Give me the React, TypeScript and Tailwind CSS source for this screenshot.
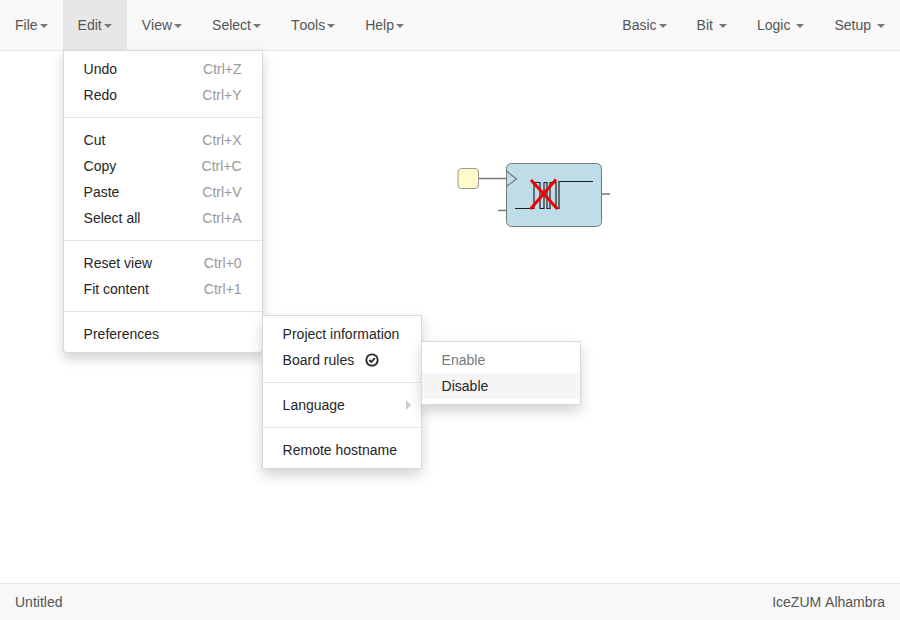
const leftMenus = ["File", "Edit", "View", "Select", "Tools", "Help"];
const rightMenus = [
  { label: "Basic", spaced: false },
  { label: "Bit", spaced: true },
  { label: "Logic", spaced: true },
  { label: "Setup", spaced: true },
];

function Caret({ spaced = false }: { spaced?: boolean }) {
  return (
    <span
      className={`inline-block w-0 h-0 align-middle border-x-4 border-t-4 border-x-transparent border-t-[#777] ${spaced ? "ml-[6px]" : "ml-[2px]"}`}
    />
  );
}

function NavItem({ label, active = false, spaced = false }: { label: string; active?: boolean; spaced?: boolean }) {
  return (
    <div className={`px-[15px] h-[50px] leading-[50px] text-[#555] ${active ? "bg-[#e7e7e7]" : ""}`}>
      {label}
      <Caret spaced={spaced} />
    </div>
  );
}

function Item({ label, hint, muted = false, hover = false }: { label: string; hint?: string; muted?: boolean; hover?: boolean }) {
  return (
    <div
      className={`flex justify-between h-[26px] px-5 leading-[26px] whitespace-nowrap ${muted ? "text-[#777]" : "text-[#262626]"} ${hover ? "bg-[#f5f5f5]" : ""}`}
    >
      <span>{label}</span>
      {hint && <span className="text-[#999]">{hint}</span>}
    </div>
  );
}

function Divider() {
  return <div className="h-px my-[9px] bg-[#e5e5e5]" />;
}

const menuClass =
  "absolute py-[5px] bg-white border border-black/15 shadow-[0_6px_12px_rgba(0,0,0,0.175)]";

function Diagram() {
  return (
    <svg className="absolute left-[450px] top-[104px]" width="170" height="80" viewBox="450 155 170 80" fill="none">
      <line x1="478" y1="178.5" x2="507" y2="178.5" stroke="#777" strokeWidth="1.5" />
      <line x1="498" y1="210.5" x2="507" y2="210.5" stroke="#777" strokeWidth="1.5" />
      <line x1="601" y1="194" x2="610" y2="194" stroke="#777" strokeWidth="1.5" />
      <rect x="458" y="168.5" width="20.5" height="20" rx="3.5" fill="#fdfbc9" stroke="#999" />
      <rect x="506.5" y="163.5" width="95" height="63" rx="5" fill="#bfdde9" stroke="#777" />
      <path d="M506.5 171 L516.5 179 L506.5 186.5" stroke="#777" strokeWidth="1.2" />
      <path
        d="M515 208.5 H534 V182.5 H540 V208.5 H544 V182.5 H547 V208.5 H550 V182.5 H556 V208.5 H559 V181.5 H593"
        stroke="#222"
        strokeWidth="1.2"
      />
      <path d="M531 180 L557.5 209 M556 179.5 L530.5 209" stroke="#f00000" strokeWidth="3" />
    </svg>
  );
}

export default function App() {
  return (
    <div className="relative w-[900px] h-[620px] flex flex-col bg-white text-sm text-[#333] [font-kerning:none] font-['Liberation_Sans',Arial,sans-serif]">
      <nav className="flex justify-between h-[51px] bg-[#f8f8f8] border-b border-[#e7e7e7]">
        <div className="flex">
          {leftMenus.map((m) => (
            <NavItem key={m} label={m} active={m === "Edit"} />
          ))}
        </div>
        <div className="flex">
          {rightMenus.map((m) => (
            <NavItem key={m.label} label={m.label} spaced={m.spaced} />
          ))}
        </div>
      </nav>

      <main className="relative flex-1">
        <Diagram />
      </main>

      <footer className="flex justify-between items-center h-[37px] px-[15px] bg-[#f8f8f8] border-t border-[#e7e7e7] text-[#555]">
        <span>Untitled</span>
        <span>IceZUM Alhambra</span>
      </footer>

      <div className={`${menuClass} left-[62.6px] top-[50px] w-[200px] rounded-b-[4px]`}>
        <Item label="Undo" hint="Ctrl+Z" />
        <Item label="Redo" hint="Ctrl+Y" />
        <Divider />
        <Item label="Cut" hint="Ctrl+X" />
        <Item label="Copy" hint="Ctrl+C" />
        <Item label="Paste" hint="Ctrl+V" />
        <Item label="Select all" hint="Ctrl+A" />
        <Divider />
        <Item label="Reset view" hint="Ctrl+0" />
        <Item label="Fit content" hint="Ctrl+1" />
        <Divider />
        <Item label="Preferences" />
      </div>

      <div className={`${menuClass} left-[261.6px] top-[315px] w-[160px]`}>
        <Item label="Project information" />
        <div className="flex items-center gap-[11px] h-[26px] px-5 text-[#262626]">
          <span>Board rules</span>
          <svg width="14" height="14" viewBox="0 0 14 14" fill="none" stroke="#262626">
            <circle cx="7" cy="7" r="5.7" strokeWidth="1.8" />
            <path d="M4.3 7 L6.3 9 L9.9 5.2" strokeWidth="1.8" />
          </svg>
        </div>
        <Divider />
        <div className="relative">
          <Item label="Language" />
          <span className="absolute right-[10px] top-2 w-0 h-0 border-y-[5px] border-l-[5px] border-y-transparent border-l-[#ccc]" />
        </div>
        <Divider />
        <Item label="Remote hostname" />
      </div>

      <div className={`${menuClass} left-[420.6px] top-[341px] w-[160px]`}>
        <Item label="Enable" muted />
        <Item label="Disable" hover />
      </div>
    </div>
  );
}
